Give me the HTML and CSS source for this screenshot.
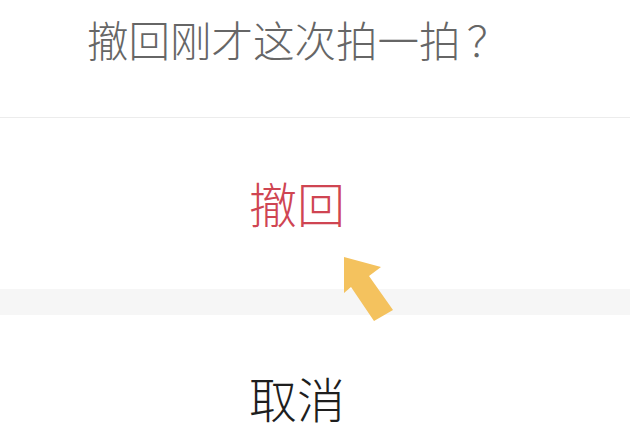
FILE: index.html
```html
<!DOCTYPE html>
<html lang="zh-CN">
<head>
<meta charset="utf-8">
<title>撤回拍一拍</title>
<link rel="stylesheet" href="styles.css">
</head>
<body>
<div class="sheet">
  <div class="title-row"><span class="title">撤回刚才这次拍一拍<span class="qmark">？</span></span></div>
  <div class="action-row"><span class="action danger">撤回</span></div>
  <div class="gap"></div>
  <div class="cancel-row"><span class="action">取消</span></div>
  <svg class="pointer" viewBox="0 0 630 432" width="630" height="432" aria-hidden="true">
    <polygon points="344,257 381,267 369,276 393,310 374,321 351,287 344,293" fill="#f4c25e"/>
  </svg>
</div>
</body>
</html>
```
FILE: styles.css
```css
html, body {
  margin: 0;
  padding: 0;
  background: #ffffff;
}
body {
  width: 630px;
  height: 432px;
  overflow: hidden;
  font-family: "Noto Sans CJK SC", "Noto Sans", sans-serif;
  font-weight: 300;
}
.sheet {
  position: relative;
  width: 630px;
  height: 432px;
  display: flex;
  flex-direction: column;
}
.title-row {
  box-sizing: border-box;
  height: 118px;
  padding: 19px 41px 0 0;
  text-align: center;
  border-bottom: 1px solid #ececec;
}
.title {
  font-size: 41.5px;
  line-height: 41px;
  color: #666666;
}
.qmark {
  display: inline-block;
  width: 1em;
  text-indent: 0.15em;
  white-space: nowrap;
}
.action-row {
  box-sizing: border-box;
  height: 171px;
  padding: 60px 36px 0 0;
  text-align: center;
}
.action {
  font-size: 48px;
  line-height: 48px;
  color: #1e1e1e;
}
.action.danger {
  color: #cf4552;
}
.gap {
  height: 26px;
  background: #f6f6f6;
}
.cancel-row {
  box-sizing: border-box;
  flex: 1;
  padding: 58px 36px 0 0;
  text-align: center;
}
.pointer {
  position: absolute;
  left: 0;
  top: 0;
  pointer-events: none;
}
```
